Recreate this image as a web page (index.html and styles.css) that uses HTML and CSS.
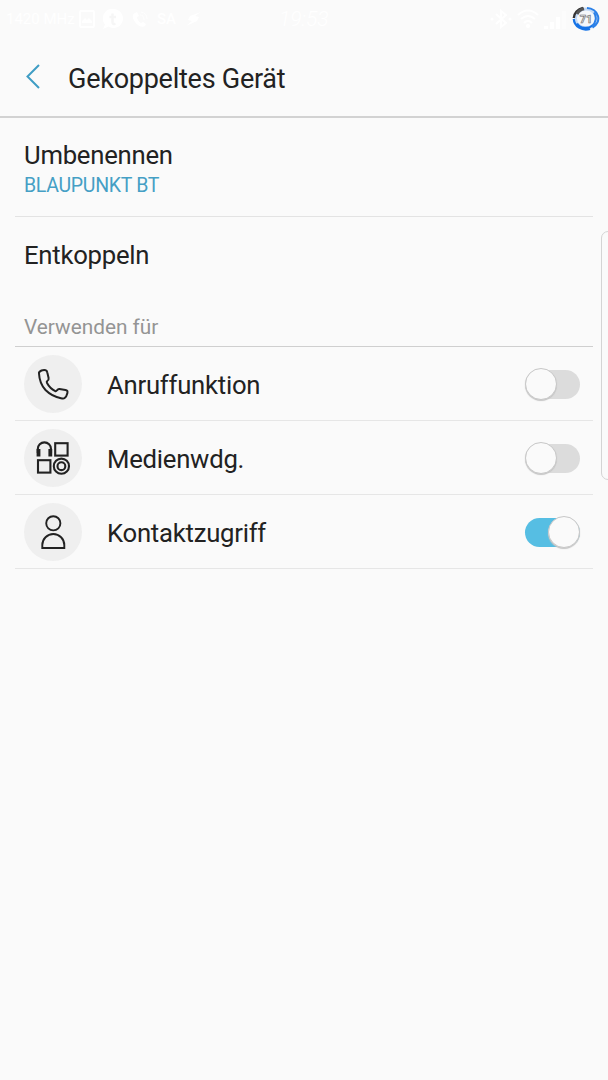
FILE: index.html
```html
<!DOCTYPE html>
<html lang="de">
<head>
    <meta charset="UTF-8">
    <title>Gekoppeltes Gerät</title>
    <meta name="viewport" content="width=device-width, initial-scale=1.0">
    <link rel="stylesheet" href="styles.css">
</head>
<body>

<div class="statusbar">
    <div class="status-left">
        <span class="mhz">1420 MHz</span>
        <svg class="ic-image" width="16" height="18" viewBox="0 0 16 18"><rect x="1" y="1" width="14" height="16" rx="1" fill="none" stroke="#fff" stroke-width="2"/><path d="M3 13V11l3-3 2 2 2-2 3 3v2z" fill="#fff"/></svg>
        <svg class="ic-bubble" width="20" height="20" viewBox="0 0 20 20"><path d="M10.500 0a9.500 9.500 0 1 1-5 17.600L0 20l2-4.500A9.500 9.500 0 0 1 10.500 0z" fill="#fff"/><path d="M9.500 4.500v9q0 2 3 1.300M6.500 8h6.500" fill="none" stroke="#f6f6f6" stroke-width="2.400"/></svg>
        <svg class="ic-call" width="16" height="17" viewBox="0 0 16 17"><path d="M3 2C0 3 0 7 3 11s7 6 10 4l1-2-3-2-2 1C7 11 5 8 5 6l2-1-2-4z" fill="#fff"/><path d="M8 4q4 0 4 5M9 1q6 1 6 7" fill="none" stroke="#fff"/></svg>
        <span class="sa">SA</span>
        <svg class="ic-bolt" width="15" height="14" viewBox="0 0 15 14"><path d="M15 0L4 4 2 8l4 1-6 5 11-5 2-4-4-1z" fill="#fff"/></svg>
    </div>
    <div class="clock">19:53</div>
    <div class="status-right">
        <svg class="ic-bt" width="22" height="20" viewBox="0 0 22 20"><path d="M6 5l10 9-5 4V2l5 4-10 9" fill="none" stroke="#fff" stroke-width="2"/><circle cx="2" cy="10" r="1.500" fill="#fff"/><circle cx="20" cy="10" r="1.500" fill="#fff"/></svg>
        <svg class="ic-wifi" width="22" height="20" viewBox="0 0 22 20"><path d="M1 6q10-9 20 0M4 10q7-6 14 0M7 14q4-4 8 0" fill="none" stroke="#fff" stroke-width="2"/><circle cx="11" cy="17" r="2" fill="#fff"/></svg>
        <svg class="ic-signal" width="22" height="20" viewBox="0 0 22 20"><path d="M0 20v-3h4v3zM6 20v-7h4v7zM12 20V8h4v12z" fill="#fff"/><path d="M18 20V2h4v18z" fill="#fcfcfc"/></svg>
        <svg class="ic-battery" width="28" height="26" viewBox="0 0 28 26">
            <ellipse cx="14" cy="12.500" rx="10.500" ry="9.500" fill="#f5f7fa" stroke="#c3d9f5" stroke-width="3"/>
            <path d="M11 1.800A12.300 11 0 0 0 1.800 12" fill="none" stroke="#333" stroke-width="2.400"/>
            <path d="M5 8A10.500 10 0 0 1 12 2.800" fill="none" stroke="#555" stroke-width="3"/>
            <path d="M1.800 13A12.200 11 0 0 0 18 23M5 17.500A10 9 0 0 0 20.500 19.500" fill="none" stroke="#1673e6" stroke-width="2.200"/>
            <path d="M15 2A12 10.500 0 0 1 20.500 21.500M22 6.500A10 10 0 0 1 20 20" fill="none" stroke="#2b80e8" stroke-width="2"/>
            <text x="14" y="16.500" class="battery-text">71</text>
        </svg>
    </div>
</div>

<div class="header">
    <svg class="back" width="14" height="26" viewBox="0 0 14 26"><path d="M13 2L1.500 13.500 13 25" fill="none" stroke="#3f9dc4" stroke-width="2"/></svg>
    <h1>Gekoppeltes Gerät</h1>
</div>

<div class="list">
    <div class="item item-rename">
        <div class="title">Umbenennen</div>
        <div class="sub">BLAUPUNKT BT</div>
    </div>
    <div class="item item-unpair">
        <div class="title">Entkoppeln</div>
    </div>
    <div class="section">Verwenden für</div>

    <div class="row">
        <div class="circle">
            <svg width="58" height="58" viewBox="0 0 58 58"><path d="M15 18.500Q14.500 17 17.500 15.500Q19.500 14.800 21.700 15.200Q23 15.500 23.300 17.500L24.600 23Q25 25 23.300 26Q22.300 27 23 28Q26 33.500 31.300 36.200Q32.200 36.500 33 35.300Q34 33.900 35.500 34.100L41.500 34.900Q44 35.300 43.400 38Q42.500 42 40.500 43.200Q39.500 43.700 37 43.200Q28 41.500 21.500 35Q15.500 28.500 15 18.500z" fill="none" stroke="#222" stroke-width="2" stroke-linejoin="round"/></svg>
        </div>
        <div class="title">Anruffunktion</div>
        <div class="switch"><div class="knob"></div></div>
    </div>
    <div class="row">
        <div class="circle">
            <svg width="58" height="58" viewBox="0 0 58 58"><g fill="none" stroke="#222" stroke-width="2.100"><path d="M13.800 24V20a6.600 6.600 0 0 1 13.200 0V24"/><path d="M14.500 20v7.500M26.300 20v7.500" stroke-width="3.800"/><rect x="31.200" y="14.200" width="12.400" height="12.400"/><rect x="14" y="31.200" width="12.400" height="12.400"/><circle cx="37.400" cy="37.200" r="7.600"/><circle cx="37.400" cy="37.200" r="3.900"/></g></svg>
        </div>
        <div class="title">Medienwdg.</div>
        <div class="switch"><div class="knob"></div></div>
    </div>
    <div class="row">
        <div class="circle">
            <svg width="58" height="58" viewBox="0 0 58 58"><g fill="none" stroke="#222" stroke-width="1.900"><circle cx="29.300" cy="20.300" r="7.100"/><path d="M18.300 45V42a11 11 0 0 1 22 0v3z"/></g></svg>
        </div>
        <div class="title">Kontaktzugriff</div>
        <div class="switch on"><div class="knob"></div></div>
    </div>
</div>

<!-- edge panel handle -->
<div class="edge"></div>

</body>
</html>
```
FILE: styles.css
```css
* { box-sizing: border-box; }
body {
    margin: 0;
    height: 1080px;
    background: #fafafa;
    color: #222;
    font-family: Roboto, sans-serif;
    position: relative;
    overflow: hidden;
}
.statusbar {
    display: grid;
    grid-template-columns: 279px 1fr auto;
    height: 36px;
    color: #fff;
}
.status-left, .status-right { display: flex; align-items: center; }
.mhz { width: 73px; margin-left: 6px; font-size: 15px; white-space: nowrap; }
.ic-bubble { margin-left: 8px; }
.ic-call { margin-left: 9px; }
.sa { margin-left: 9px; width: 20px; font-size: 15px; font-weight: 500; }
.ic-bolt { margin-left: 9px; }
.clock { font-size: 21px; line-height: 38px; font-style: italic; font-weight: 300; }
.ic-wifi { margin-left: 5px; }
.ic-signal { margin-left: 5px; }
.ic-battery { margin: 0 8px 0 6px; }
.battery-text { font-size: 11px; font-weight: 700; text-anchor: middle; fill: #e4e4e4; stroke: #666; stroke-width: 0.6px; }
.header {
    display: flex;
    align-items: center;
    height: 82px;
    padding: 0 26px;
    border-bottom: 2px solid #d2d2d2;
}
.header h1 {
    margin: 5px 0 0 28px;
    font-size: 27px;
    font-weight: 400;
    line-height: 32px;
    letter-spacing: -0.25px;
}
.list { padding: 0 15px; }
.title { font-size: 25.700px; line-height: 30px; letter-spacing: -0.25px; }
.item { padding: 0 9px; }
.item-rename { height: 99px; padding-top: 22px; border-bottom: 1px solid #e3e3e3; }
.sub { font-size: 19.500px; line-height: 31px; letter-spacing: -0.3px; color: #459fc5; }
.item-unpair { height: 94px; padding-top: 23px; }
.section {
    height: 36px;
    padding: 4px 9px 0;
    border-bottom: 1px solid #cfcfcf;
    font-size: 20.800px;
    line-height: 25px;
    color: #949494;
}
.row {
    display: flex;
    align-items: center;
    height: 74px;
    padding: 1px 13px 0 9px;
    border-bottom: 1px solid #e6e6e6;
}
.row .title { flex: 1; margin-left: 25px; padding-top: 2px; }
.circle { width: 58px; height: 58px; border-radius: 50%; background: #efefef; }
.circle svg { display: block; }
.switch {
    display: flex;
    align-items: center;
    width: 55px;
    height: 29px;
    border-radius: 15px;
    background: #dcdcdc;
}
.switch.on { justify-content: flex-end; background: #56bee3; }
.knob {
    flex: none;
    width: 32px;
    height: 32px;
    border: 1px solid #c8c8c8;
    border-radius: 50%;
    background: #fafafa;
    box-shadow: 0 1px 1px #c4c4c4;
}
.edge {
    position: absolute;
    top: 231px;
    right: -8px;
    width: 15px;
    height: 249px;
    border: 1px solid #d4d4d4;
    border-radius: 7px;
}
```
